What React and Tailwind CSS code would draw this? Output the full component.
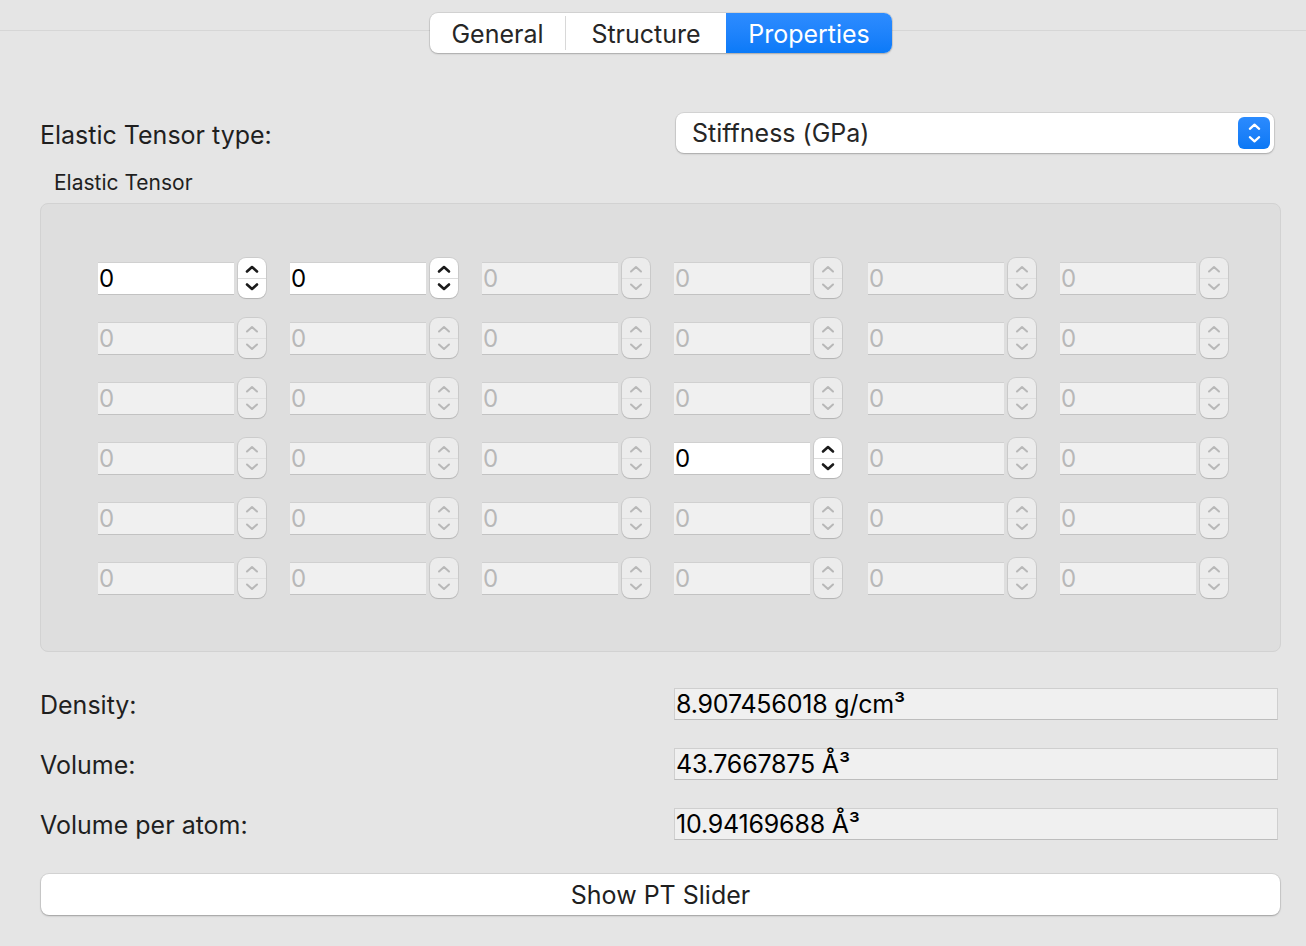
import React from "react";

const FONT = { fontFamily: "Inter, 'Noto Sans', sans-serif" };

function Chevron({ dir, color, size = 14, w = 2.2 }) {
  const d = dir === "up" ? "M2 9.5 L7 5 L12 9.5" : "M2 4.5 L7 9 L12 4.5";
  return (
    <svg width={size} height={size} viewBox="0 0 14 14" fill="none">
      <path d={d} stroke={color} strokeWidth={w} strokeLinecap="round" strokeLinejoin="round" />
    </svg>
  );
}

function Stepper({ enabled }) {
  const c = enabled ? "#1a1a1a" : "#b8b8b8";
  const w = enabled ? 2.6 : 2;
  return (
    <div
      className={
        "flex h-[40px] w-[28px] flex-col rounded-[8px] shadow-[0_0_0_1px_rgba(0,0,0,0.08),0_1px_1px_rgba(0,0,0,0.12)] " +
        (enabled ? "bg-white" : "bg-[#ececec]")
      }
    >
      <div className="flex flex-1 items-center justify-center pt-[2px]">
        <Chevron dir="up" color={c} w={w} />
      </div>
      <div className={"h-px " + (enabled ? "bg-[#dcdcdc]" : "bg-[#dedede]")} />
      <div className="flex flex-1 items-center justify-center pb-[2px]">
        <Chevron dir="down" color={c} w={w} />
      </div>
    </div>
  );
}

function Cell({ enabled, shift }) {
  return (
    <div className={"flex items-center gap-[4px] " + (shift ? "ml-[2px]" : "")}>
      <div
        className={
          "flex h-[33px] w-[136px] items-center border-t border-b border-[#d0d0d0] border-b-[#c2c2c2] pl-[1px] pt-[2px] text-[24px] " +
          (enabled ? "bg-white text-black" : "bg-[#f0f0f0] text-[#b8b8b8]")
        }
      >
        0
      </div>
      <Stepper enabled={enabled} />
    </div>
  );
}

const enabledCells = new Set(["0-0", "0-1", "3-3"]);

function ValueRow({ label, value }) {
  return (
    <div className="flex h-[32px] items-center">
      <div className="w-[634px] pt-[4px] text-[25px] text-[#1f1f1f]">{label}</div>
      <div className="flex h-[32px] w-[604px] items-center border border-[#cfcfcf] border-b-[#bdbdbd] bg-[#f0f0f0] pl-[1px] pt-[1px] text-[25px] tracking-[-0.2px] text-black">
        {value}
      </div>
    </div>
  );
}

export default function App() {
  return (
    <div className="relative h-[946px] w-[1306px] overflow-hidden bg-[#e5e5e5]" style={FONT}>
      <div className="absolute left-0 right-0 top-[30px] h-px bg-[#d6d6d6]" />

      <div className="relative ml-[430px] mt-[13px] flex h-[40px] w-[462px] overflow-hidden rounded-[8px] bg-white text-[25px] shadow-[0_0_0_1px_rgba(0,0,0,0.08),0_1px_2px_rgba(0,0,0,0.2)]">
        <div className="flex w-[135px] items-center justify-center pt-[3px] text-[#262626]">General</div>
        <div className="my-[3px] w-px bg-[#d8d8d8]" />
        <div className="flex w-[160px] items-center justify-center pt-[3px] text-[#262626]">Structure</div>
        <div className="flex flex-1 items-center justify-center bg-gradient-to-b from-[#2d8cff] to-[#0a7af8] pt-[3px] text-white">
          Properties
        </div>
      </div>

      <div className="pl-[40px]">
        <div className="mt-[60px] flex h-[40px] items-center">
          <div className="w-[636px] pt-[5px] text-[25px] text-[#1f1f1f]">Elastic Tensor type:</div>
          <div className="flex h-[40px] w-[598px] items-center justify-between rounded-[8px] bg-white pl-[16px] pr-[4px] text-[25px] text-[#262626] shadow-[0_0_0_1px_rgba(0,0,0,0.07),0_1px_2px_rgba(0,0,0,0.22)]">
            <span className="pt-[2px]">Stiffness (GPa)</span>
            <div className="flex h-[32px] w-[32px] flex-col items-center justify-center rounded-[6px] bg-gradient-to-b from-[#2b8bfe] to-[#0a78f5]">
              <Chevron dir="up" color="#ffffff" size={13} w={2.4} />
              <Chevron dir="down" color="#ffffff" size={13} w={2.4} />
            </div>
          </div>
        </div>

        <div className="ml-[14px] mt-[18px] text-[21px] leading-[24px] text-[#1f1f1f]">Elastic Tensor</div>

        <div className="mt-[8px] flex h-[449px] w-[1241px] flex-col gap-[20px] rounded-[8px] border border-[#d2d2d2] bg-[#dedede] pl-[57px] pt-[54px]">
          {[0, 1, 2, 3, 4, 5].map((r) => (
            <div key={r} className="flex gap-[24px]">
              {[0, 1, 2, 3, 4, 5].map((c) => (
                <Cell key={c} shift={c === 4} enabled={enabledCells.has(r + "-" + c)} />
              ))}
            </div>
          ))}
        </div>

        <div className="mt-[36px] flex flex-col gap-[28px]">
          <ValueRow label="Density:" value="8.907456018 g/cm³" />
          <ValueRow label="Volume:" value="43.7667875 Å³" />
          <ValueRow label="Volume per atom:" value="10.94169688 Å³" />
        </div>

        <div className="ml-[1px] mt-[34px] flex h-[41px] w-[1239px] items-center justify-center rounded-[8px] bg-white pt-[2px] text-[25px] text-[#1f1f1f] shadow-[0_0_0_1px_rgba(0,0,0,0.07),0_1px_2px_rgba(0,0,0,0.25)]">
          Show PT Slider
        </div>
      </div>
    </div>
  );
}
